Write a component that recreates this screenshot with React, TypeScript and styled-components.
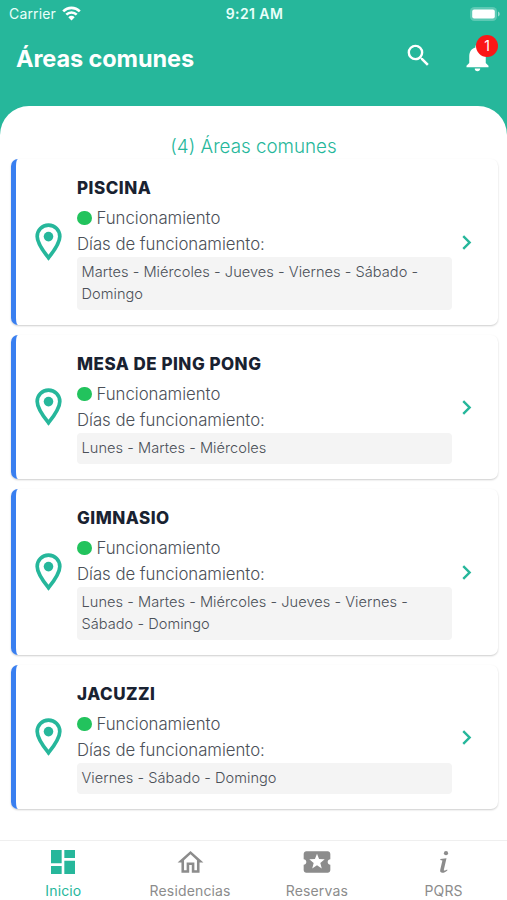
import React from "react";
import styled, { createGlobalStyle } from "styled-components";
import { MdSearch, MdNotifications, MdDashboard, MdOutlineHome, MdLocalActivity, MdChevronRight } from "react-icons/md";

const GREEN = "#26b79b";

const GlobalStyle = createGlobalStyle`
  * { box-sizing: border-box; }
  body { margin: 0; background: #fff; font-family: Inter, "Liberation Sans", sans-serif; }
`;

const Screen = styled.div`
  width: 507px;
  height: 900px;
  display: flex;
  flex-direction: column;
  background: ${GREEN};
  overflow: hidden;
`;

const StatusBar = styled.div`
  height: 27px;
  display: grid;
  grid-template-columns: 1fr auto 1fr;
  align-items: center;
  padding: 0 7px 0 9px;
  color: #e9fffa;
  font-size: 14px;
  flex: none;
`;

const Carrier = styled.div`
  display: flex;
  align-items: center;
  gap: 6px;
  letter-spacing: 0.15px;
`;

const Clock = styled.div`
  font-weight: 600;
  font-size: 14px;
  letter-spacing: 0.4px;
`;

const BatterySlot = styled.div`
  display: flex;
  justify-content: flex-end;
`;

const Header = styled.header`
  height: 79px;
  flex: none;
  display: flex;
  align-items: flex-start;
  padding: 14px 13px 0 16px;
  color: #fff;
`;

const Title = styled.h1`
  margin: 3px auto 0 0;
  font-size: 23.5px;
  line-height: 30px;
  font-weight: 700;
  letter-spacing: -0.1px;
`;

const IconButton = styled.button<{ $gap?: number }>`
  position: relative;
  display: flex;
  padding: 0;
  border: 0;
  background: none;
  color: #fff;
  margin-left: ${(p) => p.$gap ?? 0}px;
`;

const Badge = styled.span`
  position: absolute;
  top: -6px;
  right: -4px;
  width: 22px;
  height: 22px;
  border-radius: 50%;
  background: #fb1717;
  font: 14px/22px Inter, sans-serif;
  text-align: center;
`;

const Sheet = styled.main`
  flex: 1;
  min-height: 0;
  background: #fff;
  border-radius: 29px 29px 0 0;
  padding: 28px 9px 0 11px;
`;

const Count = styled.h2`
  margin: 0 2px 1px 0;
  height: 24px;
  line-height: 25px;
  text-align: center;
  font-size: 18.8px;
  font-weight: 300;
  color: ${GREEN};
`;

const List = styled.div`
  display: flex;
  flex-direction: column;
  gap: 10px;
`;

const Card = styled.article<{ $tall: boolean }>`
  height: ${(p) => (p.$tall ? 166 : 144)}px;
  display: grid;
  grid-template-columns: 61px 375px 1fr;
  align-items: center;
  border-left: 5px solid #397ff0;
  border-radius: 7px;
  box-shadow: 0 1px 2px rgba(0, 0, 0, 0.2);
`;

const PinSlot = styled.div`
  display: flex;
  padding-left: 18.5px;
`;

const Info = styled.div`
  align-self: start;
  padding-top: 16px;
  color: #4b5058;
`;

const Name = styled.h3`
  margin: 0 0 4px;
  font-size: 17px;
  line-height: 26px;
  font-weight: 850;
  letter-spacing: 0.5px;
  color: #192231;
`;

const Line = styled.div`
  display: flex;
  align-items: center;
  gap: 5px;
  height: 26px;
  font-size: 16.8px;
  font-weight: 300;
  letter-spacing: -0.04px;
`;

const Dot = styled.span`
  width: 14.5px;
  height: 14.5px;
  border-radius: 50%;
  background: #22c35d;
`;

const Days = styled.div`
  background: #f4f4f4;
  border-radius: 4px;
  padding: 4px 5px 5px 4.5px;
  font-size: 14.6px;
  font-weight: 360;
  letter-spacing: 0.03px;
  line-height: 22px;
`;

const ArrowSlot = styled.div`
  display: flex;
  color: ${GREEN};
`;

const TabBar = styled.nav`
  height: 60px;
  flex: none;
  display: grid;
  grid-template-columns: repeat(4, 1fr);
  background: #fff;
  border-top: 1px solid #efefef;
`;

const Tab = styled.div<{ $active?: boolean }>`
  display: flex;
  flex-direction: column;
  align-items: center;
  padding-top: 6px;
  gap: 5px;
  font-size: 14px;
  line-height: 18px;
  letter-spacing: 0.15px;
  color: ${(p) => (p.$active ? GREEN : "#8c8c8c")};
`;

const TabIcon = styled.span`
  height: 30px;
  display: flex;
  align-items: center;
`;

const Wifi = () => (
  <svg width="19" height="15" viewBox="0 0 19 15" fill="none" stroke="#fff" strokeWidth="2.6">
    <path d="M1.2 5.3a11.8 11.8 0 0 1 16.6 0" />
    <path d="M4.3 8.7a7.4 7.4 0 0 1 10.4 0" />
    <path d="M9.5 14.5 6.3 11.2a4.7 4.7 0 0 1 6.4 0z" fill="#fff" stroke="none" />
  </svg>
);

const Battery = () => (
  <svg width="30" height="14" viewBox="0 0 30 14">
    <rect width="27" height="14" rx="4.5" fill="#fff" opacity=".25" />
    <rect x="2.2" y="2.4" width="22.6" height="9.2" rx="2" fill="#fff" />
    <path d="M28 4.5c2.3 1 2.3 4 0 5z" fill="#fff" opacity=".5" />
  </svg>
);

const Pin = () => (
  <svg width="27" height="38" viewBox="0 0 27 38">
    <path
      d="M13.5 2.2C7 2.2 2.2 7.1 2.2 13.4c0 7.3 8.1 17.3 11.3 21.4 3.2-4.1 11.3-14.1 11.3-21.4C24.8 7.1 20 2.2 13.5 2.2z"
      fill="none"
      stroke={GREEN}
      strokeWidth="3.7"
    />
    <circle cx="13.5" cy="13.6" r="4.8" fill={GREEN} />
  </svg>
);

const InfoMark = () => (
  <svg width="12" height="24" viewBox="0 0 12 24" fill="currentColor">
    <circle cx="8" cy="3.2" r="2.1" />
    <path d="M2.4 9.1 8.5 8.2 5.9 19.4c-.3 1.5.5 1.7 3.2.1l.4.7C7.2 22.2 5.6 23 4 22.8c-1.8-.2-2.1-1.6-1.7-3.2l2.1-9-2.1-.5z" />
  </svg>
);

const areas = [
  { name: "PISCINA", days: ["Martes - Miércoles - Jueves - Viernes - Sábado -", "Domingo"] },
  { name: "MESA DE PING PONG", days: ["Lunes - Martes - Miércoles"] },
  { name: "GIMNASIO", days: ["Lunes - Martes - Miércoles - Jueves - Viernes -", "Sábado - Domingo"] },
  { name: "JACUZZI", days: ["Viernes - Sábado - Domingo"] },
];

const tabs = [
  { label: "Inicio", icon: <MdDashboard size={32} /> },
  { label: "Residencias", icon: <MdOutlineHome size={31} /> },
  { label: "Reservas", icon: <MdLocalActivity size={32} /> },
  { label: "PQRS", icon: <InfoMark /> },
];

export default function App() {
  return (
    <Screen>
      <GlobalStyle />
      <StatusBar>
        <Carrier>
          Carrier <Wifi />
        </Carrier>
        <Clock>9:21 AM</Clock>
        <BatterySlot>
          <Battery />
        </BatterySlot>
      </StatusBar>
      <Header>
        <Title>Áreas comunes</Title>
        <IconButton aria-label="Buscar">
          <MdSearch size={29} />
        </IconButton>
        <IconButton aria-label="Notificaciones" $gap={28}>
          <MdNotifications size={33} />
          <Badge>1</Badge>
        </IconButton>
      </Header>
      <Sheet>
        <Count>(4) Áreas comunes</Count>
        <List>
          {areas.map((a) => (
            <Card key={a.name} $tall={a.days.length > 1}>
              <PinSlot>
                <Pin />
              </PinSlot>
              <Info>
                <Name>{a.name}</Name>
                <Line>
                  <Dot />
                  Funcionamiento
                </Line>
                <Line>Días de funcionamiento:</Line>
                <Days>
                  {a.days.map((d) => (
                    <div key={d}>{d}</div>
                  ))}
                </Days>
              </Info>
              <ArrowSlot>
                <MdChevronRight size={29} />
              </ArrowSlot>
            </Card>
          ))}
        </List>
      </Sheet>
      <TabBar>
        {tabs.map((t, i) => (
          <Tab key={t.label} $active={i === 0}>
            <TabIcon>{t.icon}</TabIcon>
            {t.label}
          </Tab>
        ))}
      </TabBar>
    </Screen>
  );
}
